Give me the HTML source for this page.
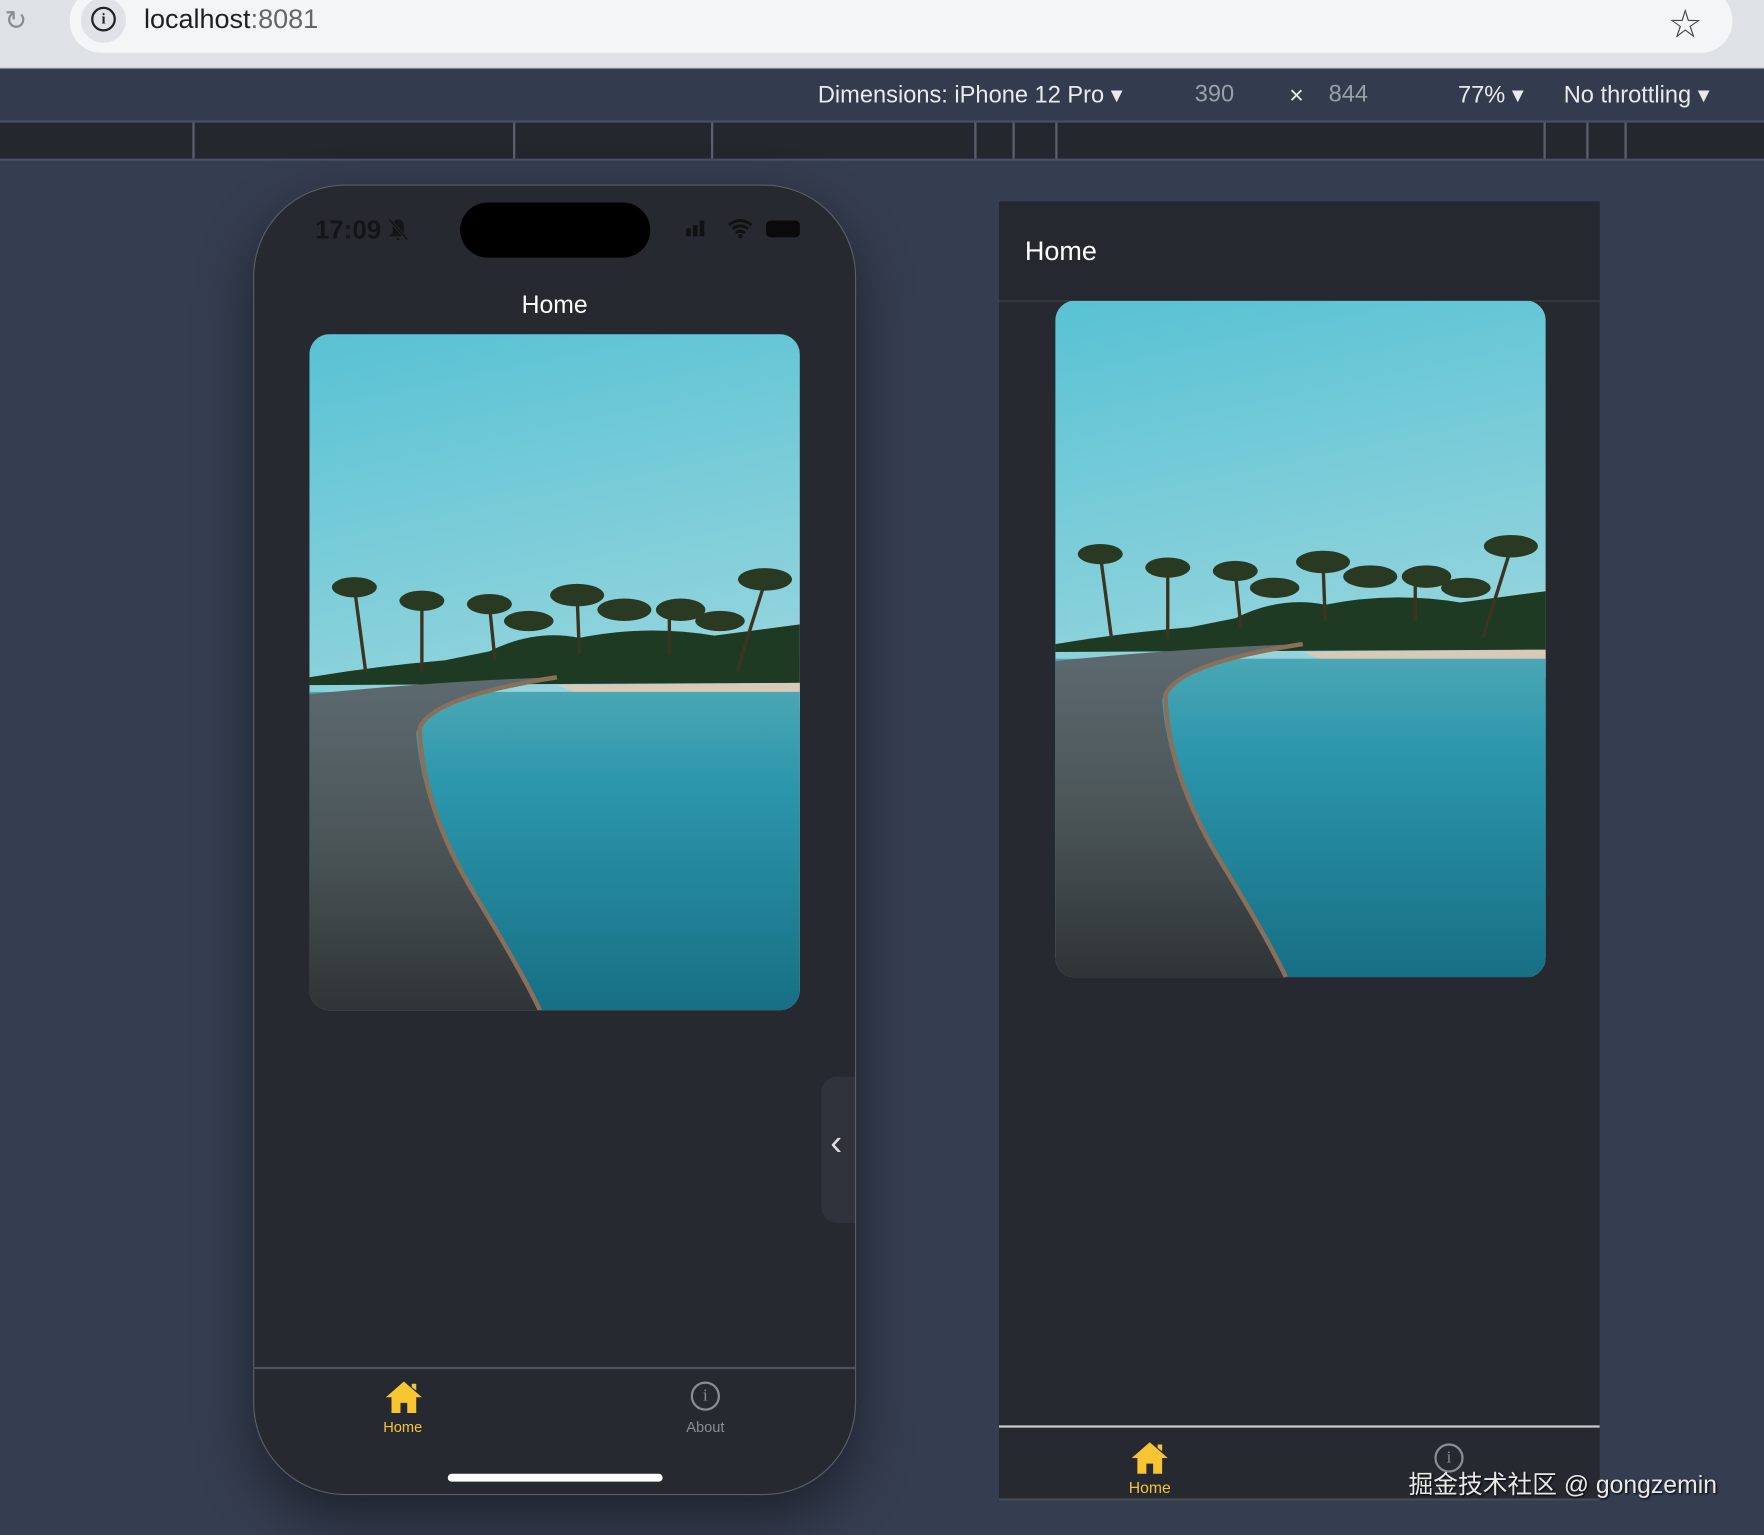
<!DOCTYPE html>
<html><head><meta charset="utf-8"><style>
html,body{margin:0;padding:0;width:1764px;height:1534px;overflow:hidden;background:#353d50}
#s{position:absolute;left:0;top:0;width:1568px;height:1364px;transform:scale(1.125);transform-origin:0 0;font-family:"Liberation Sans","Noto Sans CJK SC",sans-serif;background:#353d50}
.a{position:absolute}
</style></head><body><div id="s">
<svg width="0" height="0" style="position:absolute"><defs>
<linearGradient id="sky" x1="0" y1="0" x2="0.15" y2="1"><stop offset="0" stop-color="#58c2d4"/><stop offset="0.55" stop-color="#8fd3dc"/><stop offset="0.85" stop-color="#c9dedb"/><stop offset="1" stop-color="#e8d6c8"/></linearGradient>
<linearGradient id="wat" x1="0" y1="0" x2="0" y2="1"><stop offset="0" stop-color="#4aa7b4"/><stop offset="0.3" stop-color="#2b96ac"/><stop offset="1" stop-color="#176f84"/></linearGradient>
<linearGradient id="wood" x1="0" y1="0" x2="0" y2="1"><stop offset="0" stop-color="#5d6a70"/><stop offset="0.5" stop-color="#4b5558"/><stop offset="1" stop-color="#2f3436"/></linearGradient>
<g id="photo">
<rect width="436" height="601" fill="url(#sky)"/>
<path d="M0 305 Q60 295 120 290 L160 282 Q200 262 240 270 Q300 258 360 268 L436 258 L436 310 L0 312Z" fill="#1f3a22"/>
<g fill="#1a2e1c" stroke="#3b3520" stroke-width="3">
<path d="M50 300 L40 225" fill="none"/><path d="M100 300 L100 235" fill="none"/><path d="M165 290 L160 240" fill="none"/><path d="M240 285 L238 232" fill="none"/><path d="M380 300 L405 220" fill="none"/><path d="M320 285 L320 245" fill="none"/>
</g>
<g fill="#2a3a22">
<ellipse cx="40" cy="225" rx="20" ry="9"/><ellipse cx="100" cy="237" rx="20" ry="9"/><ellipse cx="160" cy="240" rx="20" ry="9"/><ellipse cx="238" cy="232" rx="24" ry="10"/><ellipse cx="280" cy="245" rx="24" ry="10"/><ellipse cx="330" cy="245" rx="22" ry="10"/><ellipse cx="405" cy="218" rx="24" ry="10"/><ellipse cx="195" cy="255" rx="22" ry="9"/><ellipse cx="365" cy="255" rx="22" ry="9"/>
</g>
<path d="M220 312 L436 310 L436 335 Q330 325 240 320Z" fill="#d9c9b6"/>
<rect y="318" width="436" height="283" fill="url(#wat)"/>
<path d="M0 320 Q120 308 220 305 Q100 325 95 355 Q100 420 140 490 Q185 560 205 601 L0 601Z" fill="url(#wood)"/>
<path d="M220 305 Q110 322 98 350 Q100 420 145 495 Q188 565 205 601" fill="none" stroke="#8a6f5a" stroke-width="4"/>
</g></defs></svg>

<div class="a" style="left:0;top:0;width:1568px;height:60px;background:#dee1e5;border-bottom:1px solid #b8bcc2"></div>
<div class="a" style="left:62px;top:-10px;width:1478px;height:57px;background:#f3f5f7;border-radius:28px"></div>
<div class="a" style="left:4px;top:4px;font-size:24px;color:#8a8d91">&#x21bb;</div>
<div class="a" style="left:72px;top:-2px;width:40px;height:40px;border-radius:20px;background:#dfe2e6"></div>
<div class="a" style="left:81px;top:6px;width:18px;height:18px;border:2px solid #222;border-radius:50%;font:bold 13px 'Liberation Serif',serif;text-align:center;line-height:18px;color:#222">i</div>
<div class="a" style="left:128px;top:4px;font-size:24px;color:#1f1f1f">localhost<span style="color:#666">:8081</span></div>
<div class="a" style="left:1484px;top:0px;font-size:28px;color:#444">☆</div>
<div class="a" style="left:0;top:61px;width:1568px;height:46px;background:#333b4e;border-bottom:2px solid #4a5161"></div>
<div class="a" style="left:727px;top:72px;font-size:21px;color:#e8eaed;white-space:nowrap">Dimensions: iPhone 12 Pro ▾</div>
<div class="a" style="left:1062px;top:72px;font-size:21px;color:#9aa0a8">390</div>
<div class="a" style="left:1146px;top:72px;font-size:22px;color:#e8eaed">×</div>
<div class="a" style="left:1181px;top:72px;font-size:21px;color:#9aa0a8">844</div>
<div class="a" style="left:1296px;top:72px;font-size:21px;color:#e8eaed">77% ▾</div>
<div class="a" style="left:1390px;top:72px;font-size:21px;color:#e8eaed;white-space:nowrap">No throttling ▾</div>
<div class="a" style="left:0;top:109px;width:1568px;height:32px;background:#24272e;border-bottom:2px solid #4a5161"></div>
<div class="a" style="left:171px;top:109px;width:2px;height:32px;background:#5a606c"></div>
<div class="a" style="left:456px;top:109px;width:2px;height:32px;background:#5a606c"></div>
<div class="a" style="left:632px;top:109px;width:2px;height:32px;background:#5a606c"></div>
<div class="a" style="left:866px;top:109px;width:2px;height:32px;background:#5a606c"></div>
<div class="a" style="left:900px;top:109px;width:2px;height:32px;background:#5a606c"></div>
<div class="a" style="left:938px;top:109px;width:2px;height:32px;background:#5a606c"></div>
<div class="a" style="left:1372px;top:109px;width:2px;height:32px;background:#5a606c"></div>
<div class="a" style="left:1410px;top:109px;width:2px;height:32px;background:#5a606c"></div>
<div class="a" style="left:1444px;top:109px;width:2px;height:32px;background:#5a606c"></div>

<div class="a" style="left:225px;top:164px;width:534px;height:1163px;background:#262930;border:1px solid #5a5e66;border-radius:82px;box-shadow:0 20px 50px rgba(0,0,0,.45);overflow:hidden">
 <div class="a" style="left:183px;top:15px;width:169px;height:49px;background:#000;border-radius:25px"></div>
 <div class="a" style="left:54px;top:26px;font-size:23px;font-weight:bold;color:#141518">17:09</div>
 <svg class="a" style="left:118px;top:28px" width="20" height="22" viewBox="0 0 20 22"><path d="M10 2 C6 2 5 6 5 9 L5 14 L2 17 L18 17 L15 14 L15 9 C15 6 14 2 10 2Z M8 19 L12 19 L10 21Z" fill="#141518"/><path d="M2 2 L18 20" stroke="#262930" stroke-width="3"/><path d="M2 2 L18 20" stroke="#141518" stroke-width="1.5"/></svg>
 <div class="a" style="left:384px;top:38px;width:4px;height:7px;background:#111"></div>
 <div class="a" style="left:390px;top:35px;width:4px;height:10px;background:#111"></div>
 <div class="a" style="left:396px;top:31px;width:4px;height:14px;background:#111"></div>
 <svg class="a" style="left:420px;top:29px" width="24" height="18" viewBox="0 0 24 18"><path d="M2 6 Q12 -2 22 6 M5 9.5 Q12 4 19 9.5 M8 13 Q12 10 16 13" fill="none" stroke="#111" stroke-width="2.6"/><circle cx="12" cy="16" r="2" fill="#111"/></svg>
 <div class="a" style="left:455px;top:31px;width:30px;height:15px;background:#0a0a0a;border-radius:4px"></div>
 <div class="a" style="left:0;top:93px;width:534px;text-align:center;font-size:22px;color:#fff">Home</div>
 <svg class="a" style="left:49px;top:132px;border-radius:18px" width="436" height="601" viewBox="0 0 436 601"><use href="#photo"/></svg>
 <div class="a" style="left:504px;top:792px;width:32px;height:130px;background:#30333b;border-radius:14px 0 0 14px"></div>
 <div class="a" style="left:512px;top:832px;font-size:32px;color:#ddd">‹</div>
 <div class="a" style="left:0;top:1050px;width:534px;height:2px;background:#4e525a"></div>
 <svg class="a" style="left:116px;top:1062px" width="34" height="30" viewBox="0 0 34 30"><path d="M17 1 L33 15 L28 15 L28 29 L20 29 L20 20 L14 20 L14 29 L6 29 L6 15 L1 15Z M24 3 L28 3 L28 9 L24 6Z" fill="#f7c531"/></svg>
 <div class="a" style="left:92px;top:1096px;width:80px;text-align:center;font-size:13px;color:#f7c531">Home</div>
 <div class="a" style="left:388px;top:1063px;width:22px;height:22px;border:2px solid #8a8d93;border-radius:50%;text-align:center;font:15px/22px 'Liberation Serif',serif;color:#8a8d93">i</div>
 <div class="a" style="left:361px;top:1096px;width:80px;text-align:center;font-size:13px;color:#8a8d93">About</div>
 <div class="a" style="left:172px;top:1145px;width:191px;height:7px;background:#fff;border-radius:4px"></div>
</div>

<div class="a" style="left:888px;top:179px;width:534px;height:1155px;background:#262930;overflow:hidden">
 <div class="a" style="left:0;top:0;width:534px;height:88px;background:#25282f;border-bottom:1px solid #3e424a"></div>
 <div class="a" style="left:23px;top:31px;font-size:24px;color:#fff">Home</div>
 <svg class="a" style="left:50px;top:88px;border-radius:18px" width="436" height="602" viewBox="0 0 436 601"><use href="#photo"/></svg>
 <div class="a" style="left:0;top:1088px;width:534px;height:2px;background:#c9cacc"></div>
 <svg class="a" style="left:117px;top:1102px" width="34" height="30" viewBox="0 0 34 30"><path d="M17 1 L33 15 L28 15 L28 29 L20 29 L20 20 L14 20 L14 29 L6 29 L6 15 L1 15Z M24 3 L28 3 L28 9 L24 6Z" fill="#f7c531"/></svg>
 <div class="a" style="left:94px;top:1135px;width:80px;text-align:center;font-size:14px;color:#f7c531">Home</div>
 <div class="a" style="left:387px;top:1104px;width:22px;height:22px;border:2px solid #8a8d93;border-radius:50%;text-align:center;font:15px/22px 'Liberation Serif',serif;color:#8a8d93">i</div>
 <div class="a" style="left:0;top:1153px;width:534px;height:2px;background:#4a4e56"></div>
</div>
<div class="a" style="left:1252px;top:1302px;font-size:22px;color:#e9e9ea;white-space:nowrap;text-shadow:1px 1px 2px #000">掘金技术社区 @ gongzemin</div>
</div></body></html>
